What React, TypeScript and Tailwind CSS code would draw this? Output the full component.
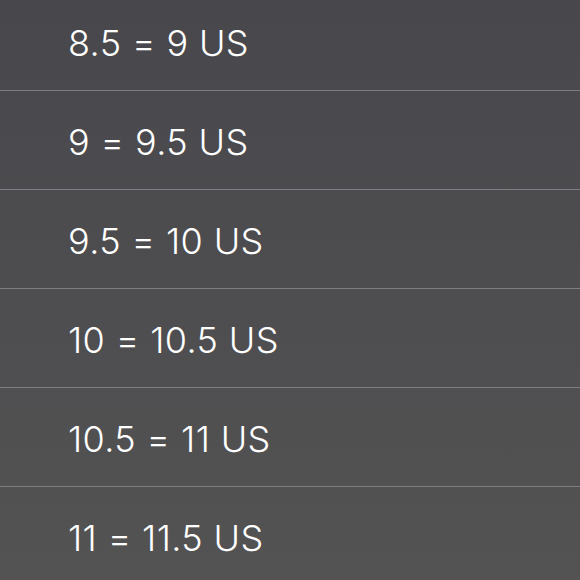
const sizes = [
  "8.5 = 9 US",
  "9 = 9.5 US",
  "9.5 = 10 US",
  "10 = 10.5 US",
  "10.5 = 11 US",
  "11 = 11.5 US",
];

export default function App() {
  return (
    <div className="h-[580px] w-[580px] overflow-hidden bg-gradient-to-b from-[#48474c] to-[#535353] font-['Inter',sans-serif]">
      <ul className="-mt-[8px]">
        {sizes.map((s) => (
          <li
            key={s}
            className="flex h-[99px] items-center border-b border-[#7e7d82] pl-[68px] pt-[4px] text-[36px] font-light leading-none tracking-[0.4px] text-white"
          >
            {s}
          </li>
        ))}
      </ul>
    </div>
  );
}
